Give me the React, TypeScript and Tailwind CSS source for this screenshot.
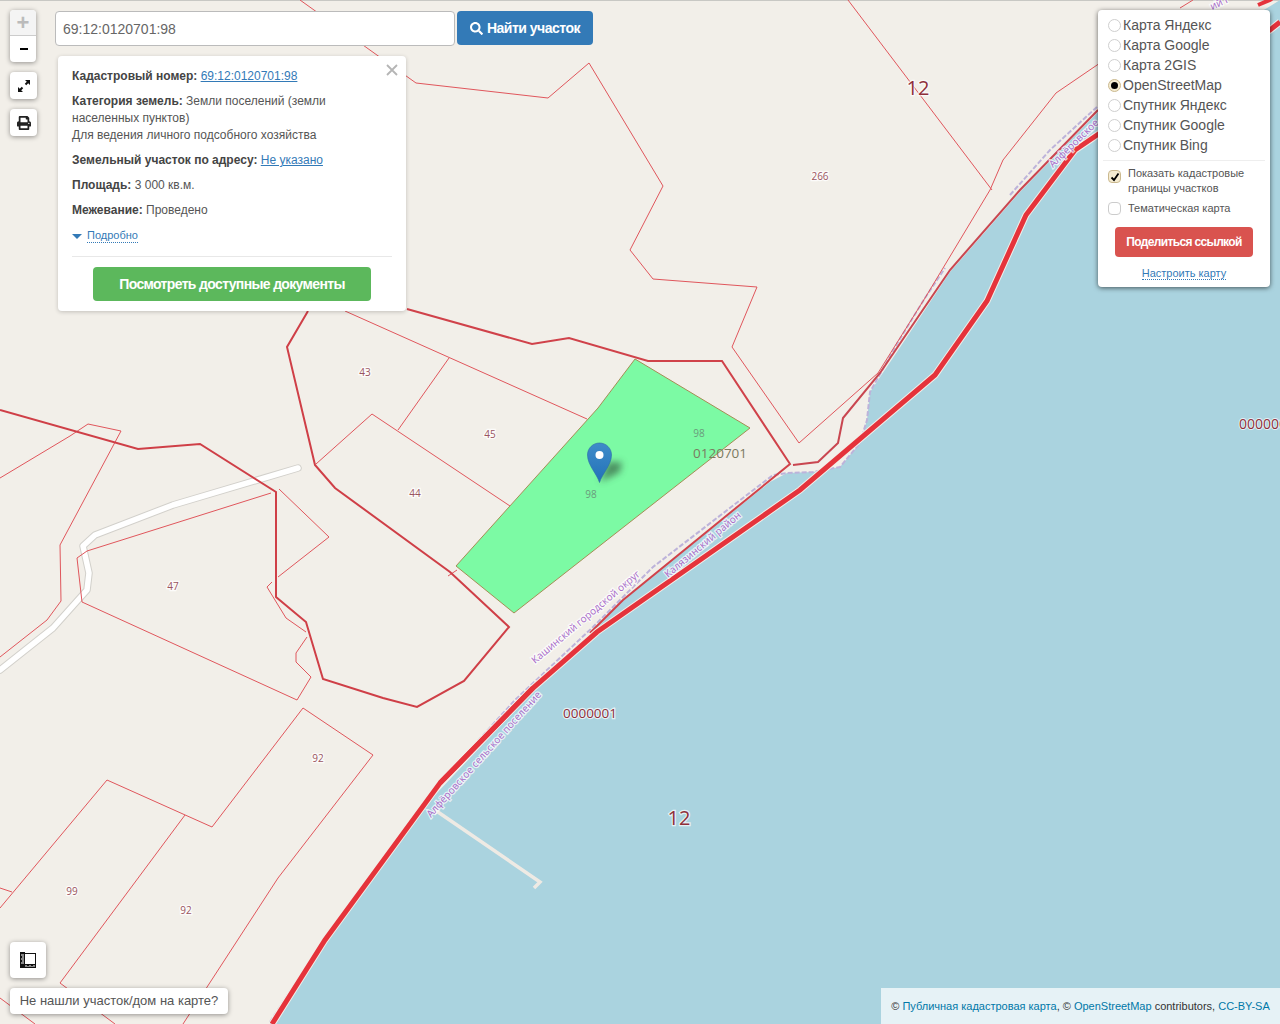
import { FaSearch, FaPrint } from "react-icons/fa";

const thin = [
  "300,0 416,83 548,98 589,63 663,186 630,250 653,279 757,287 732,347 799,443 878,373 925,298 990,190 1003,160 1056,93 1100,63",
  "848,0 992,190",
  "1180,8 1193,0",
  "345,311 587,419",
  "449,358 398,430",
  "316,464 372,414 510,506",
  "0,478 70,436 88,424 121,431 60,545 61,601 47,620 0,657",
  "271,493 87,551 77,558 82,602 297,700 311,677 296,662 296,653 307,637",
  "279,489 329,537 278,577",
  "272,582 267,587 286,618 306,632",
  "0,908 107,780 212,827 303,708 373,755 278,878 183,1024",
  "185,815 60,983 115,1024",
  "0,998 35,1024",
  "0,888 12,892",
  "457,570 448,576",
];
const labels: [string, number, number][] = [
  ["43", 365, 376], ["45", 490, 438], ["44", 415, 497], ["47", 173, 590],
  ["92", 318, 762], ["99", 72, 895], ["92", 186, 914], ["266", 820, 180],
];
const road = "298,468 173,505 95,535 83,546 89,573 87,590 53,628 0,670";

function MapLayer() {
  return (
    <svg className="absolute inset-0" width="1280" height="1024" viewBox="0 0 1280 1024" fontFamily="'Open Sans', 'Noto Sans', sans-serif">
      <rect width="1280" height="1024" fill="#f2efe9" />
      <line x1="0" y1="0.5" x2="1280" y2="0.5" stroke="#c8c8c4" />
      <polygon
        fill="#aad3df"
        points="270,1024 330,935 435,795 520,705 597,628 623,600 770,482 787,473 813,472 840,467 860,443 867,420 870,392 905,340 950,272 1020,192 1098,112 1280,0 1280,1024"
      />
      <polyline points={road} fill="none" stroke="#d2d0cb" strokeWidth="7.500" strokeLinejoin="round" strokeLinecap="round" />
      <polyline points={road} fill="none" stroke="#ffffff" strokeWidth="5.500" strokeLinejoin="round" strokeLinecap="round" />
      <polyline points="435,810 540,882 534,888" fill="none" stroke="#eeeae4" strokeWidth="3.500" />
      <polyline
        points="270,1022 325,938 438,785 515,700 593,627 653,567 773,475 787,473 813,472 840,467 860,443 867,420 870,392 898,342 925,298 945,268"
        fill="none" stroke="#bdb3da" strokeWidth="2" strokeDasharray="5 2"
      />
      <polyline points="1010,195 1050,150 1098,106" fill="none" stroke="#bdb3da" strokeWidth="2" strokeDasharray="5 2" />
      {thin.map((p, i) => (
        <polyline key={i} points={p} fill="none" stroke="#e0565c" strokeWidth="1" />
      ))}
      <polyline
        points="407,309 532,344 569,338 648,361 722,361 790,464 623,600 590,633"
        fill="none" stroke="#d0424a" strokeWidth="2"
      />
      <polyline
        points="793,465 818,462 838,443 843,418 880,373 918,317 950,270 1020,190 1098,110"
        fill="none" stroke="#c94650" strokeWidth="2"
      />
      <polyline
        points="0,410 138,449 200,444 276,492 276,597 306,622 323,679 383,698 417,707 464,681 509,627 450,572 335,488 315,465 287,347 308,311"
        fill="none" stroke="#cf3f47" strokeWidth="2"
      />
      {[0, 1].map((k) => (
        <polyline
          key={k}
          points="272,1024 325,940 440,783 533,688 597,632 800,490 935,375 987,301 1026,215 1075,150 1100,133 1270,30 1280,22"
          fill="none"
          stroke={k === 0 ? "#f2efe9" : "#e5333b"}
          strokeWidth={k === 0 ? 7 : 5}
        />
      ))}
      <polyline points="1258,5 1272,-1" fill="none" stroke="#e5333b" strokeWidth="4" />
      <polygon points="635,359 750,428 514,613 456,566 598,408" fill="#7cfaa4" stroke="#a58d55" strokeWidth="1" />

      <g fontSize="10" fill="#9a5560" textAnchor="middle" stroke="#ffffff" strokeWidth="2.500" paintOrder="stroke" strokeOpacity="0.8">
        {labels.map(([t, x, y], i) => (
          <text key={i} x={x} y={y}>{t}</text>
        ))}
      </g>
      <g fontSize="10" fill="#6a9a7c" textAnchor="middle">
        <text x="591" y="498">98</text>
        <text x="699" y="437">98</text>
      </g>
      <text x="693" y="458" fontSize="13.500" fill="#7b7a60">0120701</text>
      <g fill="#8f2f3a" textAnchor="middle" stroke="#ffffff" strokeWidth="2.500" paintOrder="stroke" strokeOpacity="0.7">
        <text x="590" y="718" fontSize="13.500">0000001</text>
        <text x="679" y="825" fontSize="20">12</text>
        <text x="918" y="95" fontSize="20">12</text>
      </g>
      <text x="1239" y="429" fontSize="14" fill="#8f2f3a" stroke="#ffffff" strokeWidth="2" paintOrder="stroke" strokeOpacity="0.7">000000</text>

      <g fontSize="10" fill="#a768c8" stroke="#ffffff" strokeWidth="2.500" paintOrder="stroke" strokeOpacity="0.7">
        <text transform="translate(535,664) rotate(-40)">Кашинский городской округ</text>
        <text transform="translate(668,578) rotate(-40)">Калязинский район</text>
        <text transform="translate(431,818) rotate(-48)">Алфёровское сельское поселение</text>
        <text transform="translate(1053,168) rotate(-44)">Алфёровское</text>
        <text transform="translate(1212,10) rotate(-25)">ий г</text>
      </g>
      {/* thick line runs over the lake labels near the shore */}
      <polyline points="440,783 533,688" fill="none" stroke="#e5333b" strokeWidth="5" />

      <defs>
        <linearGradient id="pin" x1="0" y1="0" x2="0" y2="1">
          <stop offset="0" stopColor="#3f8cc9" />
          <stop offset="1" stopColor="#2271b8" />
        </linearGradient>
        <filter id="blur" x="-80%" y="-80%" width="260%" height="260%">
          <feGaussianBlur stdDeviation="3.500" />
        </filter>
      </defs>
      <path d="M600 482 L608 462 L622 462 L620 472 Z" fill="#3a6a48" opacity="0.75" filter="url(#blur)" />
      <path
        d="M599.500 482.500 C597 474 587.500 465 587.500 455 C587.500 448 593 443 599.500 443 C606 443 611.500 448 611.500 455 C611.500 465 602 474 599.500 482.500 Z"
        fill="url(#pin)" stroke="#2a6aa6" strokeWidth="0.600"
      />
      <circle cx="599.500" cy="455" r="4" fill="#ffffff" />
    </svg>
  );
}

function Radio({ label, on }: { label: string; on?: boolean }) {
  return (
    <div className="flex h-5 items-center">
      <span className={`flex h-[13px] w-[13px] shrink-0 items-center justify-center rounded-full border ${on ? "border-[#cbb98f] bg-[#f5ecd2]" : "border-[#cfcfcf] bg-white"}`}>
        {on && <span className="h-[7px] w-[7px] rounded-full bg-black" />}
      </span>
      <span className="ml-[2px] text-[14px] leading-5 text-[#555]">{label}</span>
    </div>
  );
}

export default function App() {
  return (
    <div className="relative h-[1024px] w-[1280px] overflow-hidden font-['Liberation_Sans',Arial,sans-serif] text-[#333]">
      <MapLayer />

      {/* left controls */}
      <div className="absolute left-[10px] top-[10px] flex w-[26px] flex-col gap-[10px]">
        <div className="flex h-[52px] w-[26px] flex-col overflow-hidden rounded bg-white shadow-[0_1px_5px_rgba(0,0,0,0.4)]">
          <div className="flex h-[26px] items-center justify-center border-b border-[#ccc] bg-[#f4f4f4] text-[22px] font-bold leading-none text-[#bbb]">+</div>
          <div className="flex flex-1 items-center justify-center pl-[1px]">
            <span className="h-[2px] w-[8px] bg-black" />
          </div>
        </div>
        <div className="flex h-[27px] w-[27px] items-center justify-center rounded bg-white shadow-[0_1px_5px_rgba(0,0,0,0.4)]">
          <svg width="16" height="16" viewBox="0 0 16 16">
            <path d="M9 2h5v5l-1.800-1.800-2 2-1.400-1.400 2-2zM7 14H2V9l1.800 1.800 2-2 1.400 1.400-2 2z" fill="#111" />
          </svg>
        </div>
        <div className="flex h-[27px] w-[27px] items-center justify-center rounded bg-white shadow-[0_1px_5px_rgba(0,0,0,0.4)]">
          <FaPrint className="text-[14px] text-[#222]" />
        </div>
      </div>

      {/* search */}
      <div className="absolute left-[55px] top-[11px] flex items-start gap-[2px]">
        <div className="flex h-[35px] w-[400px] items-center rounded border border-[#bbb] bg-white px-[7px] pt-[2px] text-[14px] text-[#666]">69:12:0120701:98</div>
        <button className="flex h-[34px] w-[136px] items-center justify-center gap-[4px] rounded bg-[#337ab7] text-[14px] font-bold tracking-[-0.5px] text-white">
          <FaSearch className="text-[13px]" />
          Найти участок
        </button>
      </div>

      {/* popup */}
      <div className="absolute left-[58px] top-[56px] h-[255px] w-[348px] rounded bg-white px-[14px] pt-[12px] text-[12px] leading-[17px] text-[#555] shadow-[0_1px_4px_rgba(0,0,0,0.2)]">
        <button className="absolute right-[8px] top-[8px] text-[#b5b5b5]">
          <svg width="12" height="12" viewBox="0 0 12 12">
            <path d="M1 1l10 10M11 1L1 11" stroke="currentColor" strokeWidth="1.800" />
          </svg>
        </button>
        <p><b className="text-[#444]">Кадастровый номер:</b> <a className="text-[#337ab7] underline">69:12:0120701:98</a></p>
        <p className="mt-2 w-[290px]"><b className="text-[#444]">Категория земель:</b> Земли поселений (земли населенных пунктов)<br />Для ведения личного подсобного хозяйства</p>
        <p className="mt-2"><b className="text-[#444]">Земельный участок по адресу:</b> <a className="text-[#337ab7] underline">Не указано</a></p>
        <p className="mt-2"><b className="text-[#444]">Площадь:</b> 3 000 кв.м.</p>
        <p className="mt-2"><b className="text-[#444]">Межевание:</b> Проведено</p>
        <div className="mt-[10px] flex items-center gap-[4px] text-[11px]">
          <span className="h-0 w-0 border-x-[5px] border-t-[5px] border-x-transparent border-t-[#337ab7]" />
          <a className="ml-[1px] border-b border-dotted border-[#337ab7] leading-[13px] text-[#337ab7]">Подробно</a>
        </div>
        <hr className="mt-[13px] border-[#e8e8e8]" />
        <button className="mx-auto mt-[10px] block h-[34px] w-[278px] rounded bg-[#5cb85c] text-[14px] font-bold tracking-[-0.65px] text-white">Посмотреть доступные документы</button>
      </div>

      {/* layers panel */}
      <div className="absolute left-[1098px] top-[10px] h-[277px] w-[172px] rounded bg-white px-[10px] pt-[5px] shadow-[0_1px_5px_rgba(0,0,0,0.6)]">
        <Radio label="Карта Яндекс" />
        <Radio label="Карта Google" />
        <Radio label="Карта 2GIS" />
        <Radio label="OpenStreetMap" on />
        <Radio label="Спутник Яндекс" />
        <Radio label="Спутник Google" />
        <Radio label="Спутник Bing" />
        <hr className="-mx-[5px] mt-[5px] border-[#eee]" />
        <div className="mt-[5px] flex items-start text-[11px] leading-[15px] text-[#555]">
          <span className="mt-[4px] flex h-[13px] w-[13px] shrink-0 items-center justify-center rounded-sm border border-[#cbb98f] bg-[#f5ecd2]">
            <svg width="10" height="10" viewBox="0 0 10 10">
              <path d="M1.500 5.500L4 8l4.500-6.500" fill="none" stroke="#000" strokeWidth="1.800" />
            </svg>
          </span>
          <span className="ml-[7px]">Показать кадастровые границы участков</span>
        </div>
        <div className="mt-[5px] flex items-center text-[11px] leading-[15px] text-[#555]">
          <span className="h-[13px] w-[13px] shrink-0 rounded-sm border border-[#ccc] bg-white" />
          <span className="ml-[7px]">Тематическая карта</span>
        </div>
        <button className="mx-auto mt-[11px] block h-[30px] w-[138px] rounded bg-[#d9534f] text-[12px] font-bold tracking-[-0.65px] text-white">Поделиться ссылкой</button>
        <div className="mt-[8px] text-center text-[11px]">
          <a className="border-b border-dotted border-[#337ab7] text-[#337ab7]">Настроить карту</a>
        </div>
      </div>

      {/* bottom left */}
      <div className="absolute left-[10px] top-[942px] flex h-9 w-9 items-center justify-center rounded bg-white shadow-[0_1px_5px_rgba(0,0,0,0.4)]">
        <svg width="16" height="16" viewBox="0 0 16 16">
          <path d="M0 0h5v1H16v15H0z" fill="#111" />
          <rect x="5" y="2" width="10" height="10" fill="#fff" />
          <path d="M1 3h3M2 5h2M1 7h3M2 9h2M1 11h3M6 15v-2M8 15v-1M10 15v-2M12 15v-1M14 15v-2" stroke="#fff" strokeWidth="1" />
        </svg>
      </div>
      <div className="absolute left-[10px] top-[988px] flex h-[26px] w-[218px] items-center justify-center rounded bg-white text-[13px] text-[#555] shadow-[0_1px_5px_rgba(0,0,0,0.4)]">Не нашли участок/дом на карте?</div>

      {/* attribution */}
      <div className="absolute bottom-0 right-0 flex h-9 w-[399px] items-center justify-center bg-white/70 text-[11px] text-[#333]">
        <span>© <a className="text-[#0078a8]">Публичная кадастровая карта</a>, © <a className="text-[#0078a8]">OpenStreetMap</a> contributors, <a className="text-[#0078a8]">CC-BY-SA</a></span>
      </div>
    </div>
  );
}
